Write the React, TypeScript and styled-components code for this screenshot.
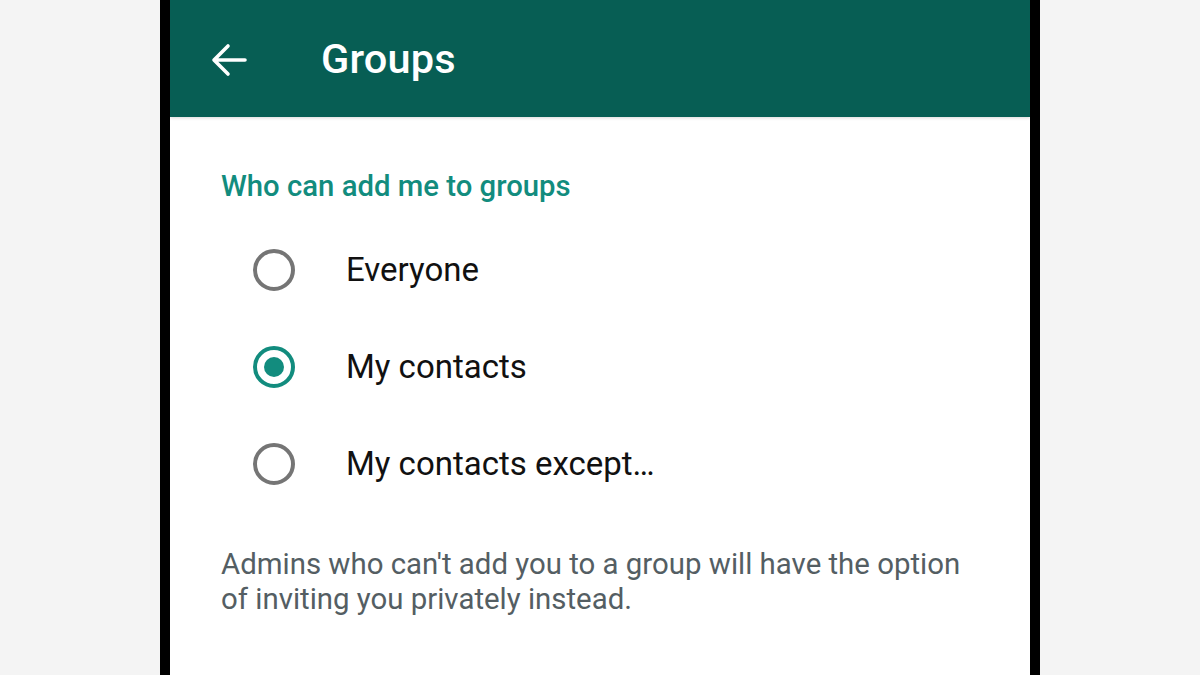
import React from "react";
import styled, { createGlobalStyle } from "styled-components";

const Global = createGlobalStyle`
  html, body { margin: 0; padding: 0; background: #f4f4f4; }
  body { font-family: Roboto, "Noto Sans", sans-serif; }
`;

const Page = styled.div`
  width: 1200px;
  height: 675px;
  display: flex;
  justify-content: center;
  background: #f4f4f4;
  overflow: hidden;
`;

const Phone = styled.div`
  width: 860px;
  height: 675px;
  border-left: 10px solid #000;
  border-right: 10px solid #000;
  background: #fff;
  display: flex;
  flex-direction: column;
`;

const Header = styled.header`
  height: 117px;
  background: #075e54;
  display: flex;
  align-items: center;
  padding-left: 41px;
  box-shadow: 0 1px 3px rgba(0, 0, 0, 0.15);
  position: relative;
  z-index: 1;
  flex-shrink: 0;
`;

const BackButton = styled.div`
  width: 36px;
  height: 36px;
  display: flex;
  align-items: center;
  justify-content: center;
  margin-top: 2px;
`;

const Title = styled.h1`
  margin: 0 0 0 74px;
  color: #fff;
  font-size: 41.5px;
  font-weight: 500;
  letter-spacing: 0.2px;
  margin-top: 0;
`;

const Content = styled.div`
  display: flex;
  flex-direction: column;
  padding: 52px 0 0 51px;
`;

const SectionTitle = styled.div`
  color: #128c7e;
  font-size: 29.3px;
  font-weight: 500;
  line-height: 34px;
`;

const Options = styled.div`
  display: flex;
  flex-direction: column;
  margin-top: 18px;
`;

const Row = styled.div`
  height: 97px;
  display: flex;
  align-items: center;
  padding-left: 32px;
`;

const Radio = styled.div<{ $checked?: boolean }>`
  width: 42px;
  height: 42px;
  box-sizing: border-box;
  border-radius: 50%;
  border: 4px solid ${(p) => (p.$checked ? "#128c7e" : "#757575")};
  display: flex;
  align-items: center;
  justify-content: center;
  &::after {
    content: "";
    display: ${(p) => (p.$checked ? "block" : "none")};
    width: 20px;
    height: 20px;
    border-radius: 50%;
    background: #128c7e;
  }
`;

const Label = styled.div`
  margin-left: 51px;
  font-size: 33px;
  color: #111;
`;

const Note = styled.p`
  margin: 35px 0 0;
  width: 760px;
  font-size: 29.4px;
  line-height: 35px;
  color: #545e63;
`;

const options = [
  { label: "Everyone", checked: false },
  { label: "My contacts", checked: true },
  { label: "My contacts except…", checked: false },
];

export default function App() {
  return (
    <>
      <Global />
      <Page>
        <Phone>
          <Header>
            <BackButton>
              <svg width="36" height="36" viewBox="0 0 36 36" fill="none">
                <path
                  d="M34 18H4M17 4L3 18l14 14"
                  stroke="#fff"
                  strokeWidth="3.6"
                  strokeLinecap="round"
                  strokeLinejoin="round"
                />
              </svg>
            </BackButton>
            <Title>Groups</Title>
          </Header>
          <Content>
            <SectionTitle>Who can add me to groups</SectionTitle>
            <Options>
              {options.map((o) => (
                <Row key={o.label}>
                  <Radio $checked={o.checked} />
                  <Label>{o.label}</Label>
                </Row>
              ))}
            </Options>
            <Note>
              Admins who can't add you to a group will have the option of
              inviting you privately instead.
            </Note>
          </Content>
        </Phone>
      </Page>
    </>
  );
}
